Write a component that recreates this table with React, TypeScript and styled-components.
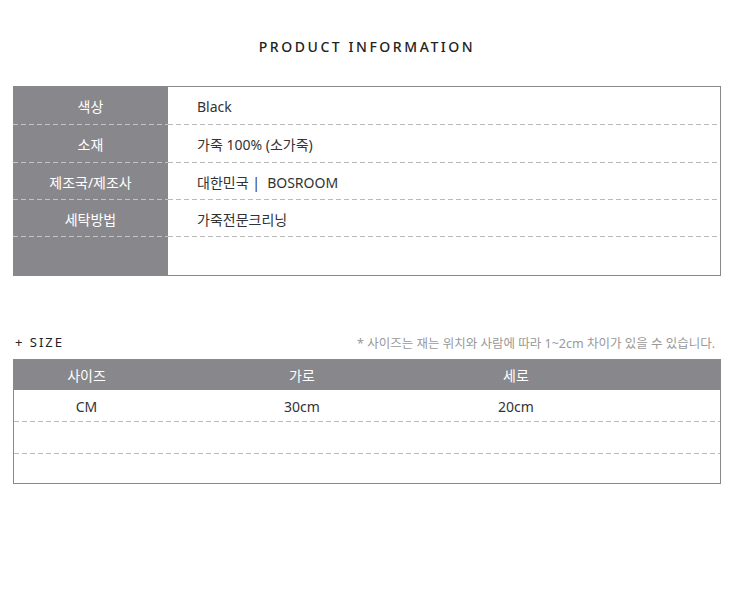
import React from 'react';
import styled, {createGlobalStyle} from 'styled-components';

const Global = createGlobalStyle`
  body{
    margin: 0;
    background: #fff;
    font-family: "Noto Sans", "Noto Sans CJK KR", sans-serif;
  }
`;

const Page = styled.div`
  width: 738px;
  padding: 36px 17px 0 13px;
  box-sizing: border-box;
`;

const Title = styled.h2`
  margin: 0 0 28px;
  text-align: center;
  font-size: 14px;
  font-weight: 500;
  letter-spacing: 2.55px;
  color: #222;
  line-height: 22px;
`;

const dash = `repeating-linear-gradient(to right, #bbb 0 5px, transparent 5px 8px)`;

const InfoTable = styled.div`
  display: grid;
  grid-template-columns: 155px 1fr;
  border: 1px solid #88878c;
  border-left: none;
`;

const Label = styled.div<{$h: number; $last?: boolean}>`
  height: ${p => p.$h}px;
  background: #88878c;
  color: #fff;
  font-size: 14px;
  display: flex;
  align-items: center;
  justify-content: center;
  position: relative;
  ${p => !p.$last && `
    &::after{
      content: '';
      position: absolute;
      left: 0; right: 0; bottom: 0;
      height: 1px;
      background: repeating-linear-gradient(to right, #c4c3c7 0 5px, transparent 5px 8px);
    }
  `}
`;

const Value = styled.div<{$h: number; $last?: boolean}>`
  height: ${p => p.$h}px;
  color: #333;
  font-size: 14px;
  display: flex;
  align-items: center;
  padding-left: 29px;
  white-space: pre;
  position: relative;
  ${p => !p.$last && `
    &::after{
      content: '';
      position: absolute;
      left: 0; right: 0; bottom: 0;
      height: 1px;
      background: ${dash};
    }
  `}
`;

const SizeHead = styled.div`
  margin-top: 55px;
  display: flex;
  justify-content: space-between;
  align-items: center;
  height: 22px;
  padding: 0 6px 0 2px;
`;

const SizeTitle = styled.span`
  font-size: 13px;
  letter-spacing: 2px;
  color: #222;
`;

const Note = styled.span`
  font-size: 12.5px;
  color: #999;
`;

const SizeTable = styled.div`
  margin-top: 6px;
  border: 1px solid #88878c;
  border-top: none;
`;

const Row = styled.div<{$head?: boolean; $dashed?: boolean; $h: number}>`
  display: grid;
  grid-template-columns: 145px 286px 142px 1fr;
  height: ${p => p.$h}px;
  background: ${p => (p.$head ? '#88878c' : '#fff')};
  color: ${p => (p.$head ? '#fff' : '#333')};
  font-size: 14px;
  position: relative;
  ${p => p.$head && `margin: 0 -1px; padding: 0 1px;`}
  ${p => p.$dashed && `
    &::after{
      content: '';
      position: absolute;
      left: 0; right: 0; bottom: 0;
      height: 1px;
      background: ${dash};
    }
  `}
`;

const Cell = styled.div`
  display: flex;
  align-items: center;
  justify-content: center;
`;

const info = [
  ['색상', 'Black'],
  ['소재', '가죽 100% (소가죽)'],
  ['제조국/제조사', '대한민국 |  BOSROOM'],
  ['세탁방법', '가죽전문크리닝'],
  ['', ''],
];
const heights = [38, 38, 37, 37, 38];

export default function App() {
  return (
    <Page>
      <Global />
      <Title>PRODUCT INFORMATION</Title>
      <InfoTable>
        {info.map(([k, v], i) => (
          <React.Fragment key={i}>
            <Label $h={heights[i]} $last={i === info.length - 1}>{k}</Label>
            <Value $h={heights[i]} $last={i === info.length - 1}>{v}</Value>
          </React.Fragment>
        ))}
      </InfoTable>
      <SizeHead>
        <SizeTitle>+ SIZE</SizeTitle>
        <Note>* 사이즈는 재는 위치와 사람에 따라 1~2cm 차이가 있을 수 있습니다.</Note>
      </SizeHead>
      <SizeTable>
        <Row $head $h={31}>
          <Cell>사이즈</Cell>
          <Cell>가로</Cell>
          <Cell>세로</Cell>
          <Cell />
        </Row>
        <Row $dashed $h={32}>
          <Cell>CM</Cell>
          <Cell>30cm</Cell>
          <Cell>20cm</Cell>
          <Cell />
        </Row>
        <Row $dashed $h={32}>
          <Cell /><Cell /><Cell /><Cell />
        </Row>
        <Row $h={29}>
          <Cell /><Cell /><Cell /><Cell />
        </Row>
      </SizeTable>
    </Page>
  );
}
